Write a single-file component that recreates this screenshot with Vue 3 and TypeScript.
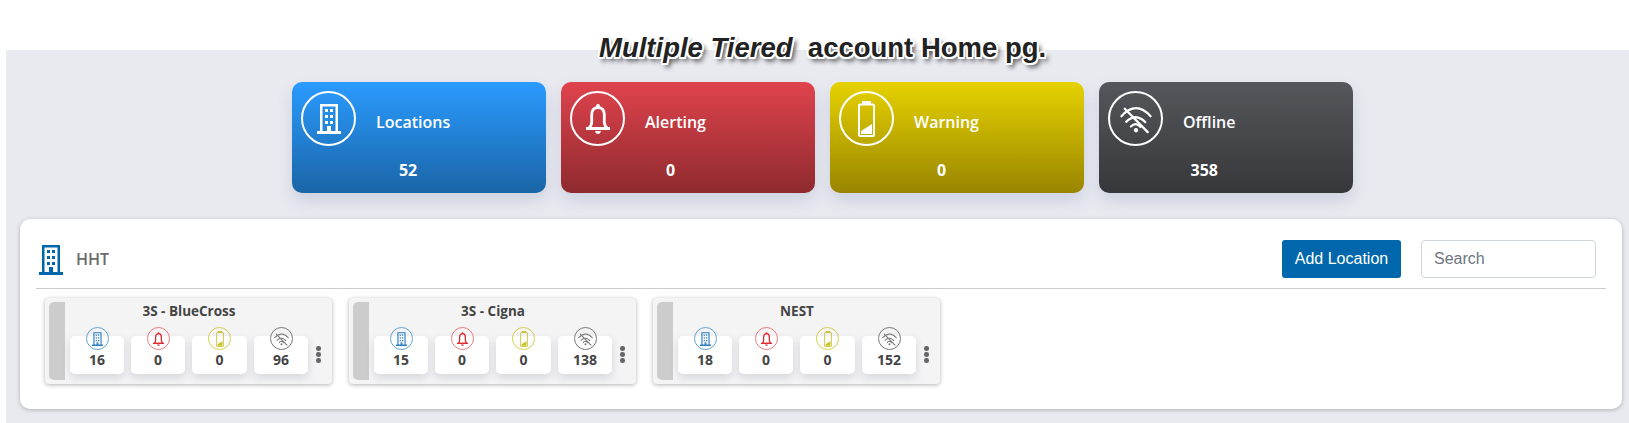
<script setup lang="ts">
type IconName = 'building' | 'bell' | 'battery' | 'wifi'

interface Stat {
  label: string
  value: number
  icon: IconName
  tone: string
}

interface Site {
  name: string
  counts: number[]
}

const stats: Stat[] = [
  { label: 'Locations', value: 52, icon: 'building', tone: 'blue' },
  { label: 'Alerting', value: 0, icon: 'bell', tone: 'red' },
  { label: 'Warning', value: 0, icon: 'battery', tone: 'yellow' },
  { label: 'Offline', value: 358, icon: 'wifi', tone: 'dark' },
]

const miniIcons: { icon: IconName; tone: string }[] = [
  { icon: 'building', tone: 'blue' },
  { icon: 'bell', tone: 'red' },
  { icon: 'battery', tone: 'yellow' },
  { icon: 'wifi', tone: 'dark' },
]

const sites: Site[] = [
  { name: '3S - BlueCross', counts: [16, 0, 0, 96] },
  { name: '3S - Cigna', counts: [15, 0, 0, 138] },
  { name: 'NEST', counts: [18, 0, 0, 152] },
]
</script>

<template>
  <div class="page">
    <svg class="sprite" width="0" height="0" aria-hidden="true">
      <symbol id="i-building" viewBox="0 0 24 30">
        <path
          fill="currentColor"
          fill-rule="evenodd"
          d="M3 0h18v27h3v3H0v-3h3zM5.500 2.500V27h4.500v-5h4v5h4.500V2.500zM8 5h3v3H8zM13 5h3v3h-3zM8 11h3v3H8zM13 11h3v3h-3zM8 17h3v3H8zM13 17h3v3h-3z"
        />
      </symbol>
      <symbol id="i-bell" viewBox="0 0 24 30">
        <circle cx="12" cy="2" r="2" fill="currentColor" />
        <path
          fill="none"
          stroke="currentColor"
          stroke-width="2.800"
          d="M12 3.500c-4.200 0-6.300 3-6.300 7v8c0 2-1.300 4-3 6h18.600c-1.700-2-3-4-3-6v-8c0-4-2.100-7-6.300-7z"
        />
        <path fill="currentColor" d="M0 23h24v3H0zM9 27h6c-.4 2-1.500 3-3 3s-2.600-1-3-3z" />
      </symbol>
      <symbol id="i-battery" viewBox="0 0 17 36">
        <path fill="currentColor" d="M4 0h9v3H4z" />
        <rect x="1" y="3.500" width="15" height="31.500" rx="1" fill="none" stroke="currentColor" stroke-width="2" />
        <path fill="currentColor" d="M3 33v-3l11-7v10z" />
      </symbol>
      <symbol id="i-wifi" viewBox="0 0 34 32">
        <g fill="none" stroke="currentColor" stroke-width="2.400" stroke-linecap="round">
          <path d="M1.500 13Q17 -4 32.500 13" />
          <path d="M6.500 19Q17 9 27 19.500" />
          <path d="M11.500 24Q17 18.500 22 24.500" />
          <path d="M5 5L29.500 30" />
        </g>
        <circle cx="17" cy="28" r="2.300" fill="currentColor" />
      </symbol>
    </svg>

    <h1 class="banner"><em>Multiple Tiered</em>&nbsp; account Home pg.</h1>

    <main class="board">
      <section class="stats">
        <article v-for="stat in stats" :key="stat.label" class="stat" :class="stat.tone">
          <span class="stat-ring">
            <svg class="stat-icon" :class="`stat-icon-${stat.icon}`">
              <use :href="`#i-${stat.icon}`" />
            </svg>
          </span>
          <div class="stat-text">
            <span class="stat-label">{{ stat.label }}</span>
            <span class="stat-value">{{ stat.value }}</span>
          </div>
        </article>
      </section>

      <section class="panel">
        <header class="panel-head">
          <svg class="panel-icon"><use href="#i-building" /></svg>
          <span class="panel-name">HHT</span>
          <button class="add-btn" type="button">Add Location</button>
          <input class="search" type="text" placeholder="Search" />
        </header>

        <div class="sites">
          <article v-for="site in sites" :key="site.name" class="site">
            <span class="site-strip"></span>
            <div class="site-body">
              <div class="site-name">{{ site.name }}</div>
              <div class="tiles">
                <div v-for="(count, i) in site.counts" :key="i" class="tile" :class="{ wide: i === 2 }">
                  <span class="mini-ring" :class="miniIcons[i].tone">
                    <svg class="mini-icon" :class="`mini-icon-${miniIcons[i].icon}`">
                      <use :href="`#i-${miniIcons[i].icon}`" />
                    </svg>
                  </span>
                  <span class="tile-count">{{ count }}</span>
                </div>
              </div>
            </div>
            <div class="more"><i></i><i></i><i></i></div>
          </article>
        </div>
      </section>
    </main>
  </div>
</template>

<style>
html,
body {
  margin: 0;
  background: #fff;
}
</style>

<style scoped>
.page {
  position: relative;
  height: 423px;
  padding-top: 50px;
  box-sizing: border-box;
  overflow: hidden;
  font-family: "Open Sans", "Noto Sans", sans-serif;
}

.sprite {
  position: absolute;
}

.banner {
  position: absolute;
  top: 31px;
  left: 599px;
  margin: 0;
  font: bold 27.500px/34px "Liberation Sans", Arial, sans-serif;
  color: #222;
  white-space: nowrap;
  text-shadow:
    -2px 0 0 #fff, 2px 0 0 #fff, 0 -2px 0 #fff, 0 2px 0 #fff,
    -1.500px -1.500px 0 #fff, 1.500px -1.500px 0 #fff, -1.500px 1.500px 0 #fff, 1.500px 1.500px 0 #fff,
    3px 4px 5px rgba(0, 0, 0, 0.85);
}

.board {
  height: 373px;
  margin-left: 6px;
  padding: 32px 7px 0 14px;
  box-sizing: border-box;
  background: #e9eaf0;
}

.stats {
  display: flex;
  gap: 15.500px;
  margin-left: 272px;
}

.stat {
  display: flex;
  gap: 20px;
  width: 253.500px;
  height: 111px;
  padding: 9px;
  box-sizing: border-box;
  border-radius: 10px;
  color: #fff;
  box-shadow: 0 8px 16px rgba(90, 115, 160, 0.2);
}

.stat.blue {
  background: linear-gradient(#2a9bff, #1a65a6);
}

.stat.red {
  background: linear-gradient(#e0434d, #8e2a2e);
}

.stat.yellow {
  background: linear-gradient(#e6d200, #998500);
}

.stat.dark {
  background: linear-gradient(#56575c, #36373a);
}

.stat-ring {
  display: flex;
  align-items: center;
  justify-content: center;
  flex: none;
  width: 55px;
  height: 55px;
  box-sizing: border-box;
  border: 2px solid #fff;
  border-radius: 50%;
}

.stat-icon {
  width: 24px;
  height: 30px;
}

.stat-icon-battery {
  width: 17px;
  height: 36px;
}

.stat-icon-wifi {
  width: 32px;
  height: 30px;
}

.stat-text {
  display: flex;
  flex-direction: column;
  align-items: center;
  padding-top: 20px;
}

.stat-label {
  font-size: 16px;
  font-weight: 600;
  line-height: 22px;
}

.stat-value {
  margin-top: 26px;
  margin-right: 10px;
  font-size: 16px;
  font-weight: 700;
  line-height: 22px;
}

.panel {
  height: 190px;
  margin-top: 26px;
  padding: 21px 16px 0;
  box-sizing: border-box;
  border-radius: 10px;
  background: #fff;
  box-shadow: 0 1px 4px rgba(0, 0, 0, 0.25);
}

.panel-head {
  display: flex;
  align-items: center;
  padding: 0 10px 10px 3px;
  border-bottom: 1px solid #ccc;
}

.panel-icon {
  width: 24px;
  height: 30px;
  margin-top: 2px;
  color: #0067ac;
}

.panel-name {
  flex: 1;
  margin-left: 13px;
  font-size: 16px;
  font-weight: 600;
  color: #6b6b6b;
}

.add-btn {
  width: 119px;
  height: 38px;
  padding: 0;
  border: 0;
  border-radius: 3px;
  background: #0067ac;
  color: #fff;
  font: 16px "Liberation Sans", Arial, sans-serif;
}

.search {
  width: 175px;
  height: 38px;
  margin-left: 20px;
  padding: 0 12px;
  box-sizing: border-box;
  border: 1px solid #ced4da;
  border-radius: 4px;
  font: 16px "Liberation Sans", Arial, sans-serif;
}

.search::placeholder {
  color: #6c757d;
  opacity: 1;
}

.sites {
  display: flex;
  gap: 17px;
  margin: 9px 0 0 9px;
}

.site {
  display: flex;
  width: 287px;
  height: 86px;
  padding: 4px 0 4px 4px;
  box-sizing: border-box;
  border-radius: 4px;
  background: #f4f4f5;
  box-shadow: 0 1px 4px rgba(0, 0, 0, 0.3);
}

.site-strip {
  flex: none;
  width: 16px;
  border-radius: 5px 0 0 5px;
  background: #ccc;
}

.site-body {
  margin-left: 5px;
}

.site-name {
  font-size: 13.500px;
  font-weight: 700;
  line-height: 18px;
  text-align: center;
  color: #444;
}

.tiles {
  display: flex;
  gap: 7px;
  margin-top: 16px;
}

.tile {
  display: flex;
  flex-direction: column;
  align-items: center;
  width: 54px;
  height: 38px;
  border-radius: 5px;
  background: #fff;
  box-shadow: 0 4px 8px rgba(80, 85, 110, 0.18);
}

.tile.wide {
  width: 55px;
}

.mini-ring {
  display: flex;
  align-items: center;
  justify-content: center;
  flex: none;
  width: 23px;
  height: 23px;
  margin-top: -9px;
  box-sizing: border-box;
  border: 1px solid;
  border-radius: 50%;
}

.mini-ring.blue {
  border-color: #5fa4d5;
  color: #2a80c4;
}

.mini-ring.red {
  border-color: #e87a7d;
  color: #e02a2f;
}

.mini-ring.yellow {
  border-color: #d6cd4a;
  color: #c9bf2c;
}

.mini-ring.dark {
  border-color: #777;
  color: #777;
}

.mini-icon {
  width: 11px;
  height: 14px;
}

.mini-icon-battery {
  width: 8px;
  height: 16px;
}

.mini-icon-wifi {
  width: 15px;
  height: 14px;
}

.tile-count {
  margin-top: 1px;
  font-size: 14px;
  font-weight: 700;
  line-height: 18px;
  color: #444;
}

.more {
  display: flex;
  flex-direction: column;
  gap: 1.500px;
  margin: 44px 0 0 8px;
}

.more i {
  width: 4.500px;
  height: 4.500px;
  border-radius: 50%;
  background: #666;
}
</style>
